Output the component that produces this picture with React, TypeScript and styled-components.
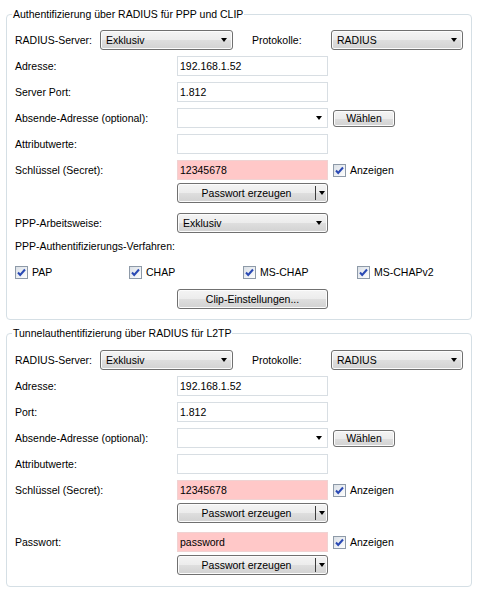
import styled, { createGlobalStyle } from "styled-components";

const GlobalStyle = createGlobalStyle`
    html, body {
        margin: 0;
        padding: 0;
        background: #ffffff;
    }
    body {
        font-family: "Liberation Sans", Arial, sans-serif;
        font-size: 10.5px;
        color: #000000;
    }
`;

const Page = styled.div`
    width: 480px;
    height: 596px;
    overflow: hidden;
`;

const Group = styled.div<{ $mt: number; $pt: number; $pb: number }>`
    position: relative;
    box-sizing: border-box;
    width: 466px;
    margin: ${(p) => p.$mt}px 0 0 6px;
    padding: ${(p) => p.$pt}px 8px ${(p) => p.$pb}px 8px;
    border: 1px solid #d5dfe5;
    border-radius: 4px;
`;

const Legend = styled.span`
    position: absolute;
    top: -8px;
    left: 5px;
    padding: 0 1px;
    line-height: 14px;
    background: #ffffff;
    white-space: nowrap;
`;

const Row = styled.div<{ $mt?: number; $h?: number }>`
    display: flex;
    align-items: center;
    height: ${(p) => p.$h ?? 20}px;
    margin-top: ${(p) => p.$mt ?? 6}px;
`;

const Label = styled.span<{ $w?: number; $ml?: number }>`
    flex: none;
    width: ${(p) => p.$w ?? 162}px;
    margin-left: ${(p) => p.$ml ?? 0}px;
    white-space: nowrap;
`;

const TextBox = styled.div<{ $pink?: boolean }>`
    box-sizing: border-box;
    flex: none;
    width: 151px;
    height: 20px;
    padding: 0 2px;
    line-height: 18px;
    border: 1px solid ${(p) => (p.$pink ? "#f0d2d2" : "#d8dee3")};
    background: ${(p) => (p.$pink ? "#ffc8c8" : "#ffffff")};
    white-space: nowrap;
`;

const Arrow = styled.span`
    flex: none;
    width: 0;
    height: 0;
    border-left: 3.5px solid transparent;
    border-right: 3.5px solid transparent;
    border-top: 4px solid #000000;
`;

const DropButton = styled.div<{ $w: number }>`
    box-sizing: border-box;
    flex: none;
    display: flex;
    align-items: center;
    justify-content: space-between;
    width: ${(p) => p.$w}px;
    height: 20px;
    padding: 0 5px 0 5px;
    border: 1px solid #707070;
    border-radius: 3px;
    background: linear-gradient(#f4f4f4 0%, #ececec 50%, #dedede 52%, #d2d2d2 100%);
    box-shadow: inset 0 0 0 1px #fcfcfc;
`;

const Combo = styled.div`
    box-sizing: border-box;
    flex: none;
    display: flex;
    align-items: center;
    justify-content: flex-end;
    width: 151px;
    height: 20px;
    padding-right: 5px;
    border: 1px solid #d8dee3;
    background: #ffffff;
`;

const Button = styled.div<{ $w: number; $h?: number; $ml?: number }>`
    box-sizing: border-box;
    flex: none;
    display: flex;
    align-items: center;
    justify-content: center;
    width: ${(p) => p.$w}px;
    height: ${(p) => p.$h ?? 20}px;
    margin-left: ${(p) => p.$ml ?? 0}px;
    border: 1px solid #707070;
    border-radius: 3px;
    background: linear-gradient(#f4f4f4 0%, #ececec 50%, #dedede 52%, #d2d2d2 100%);
    box-shadow: inset 0 0 0 1px #fcfcfc;
    white-space: nowrap;
`;

const Split = styled.div`
    box-sizing: border-box;
    flex: none;
    display: flex;
    width: 151px;
    height: 20px;
    margin-left: 162px;
    border: 1px solid #707070;
    border-radius: 3px;
    background: linear-gradient(#f4f4f4 0%, #ececec 50%, #dedede 52%, #d2d2d2 100%);
    box-shadow: inset 0 0 0 1px #fcfcfc;
`;

const SplitMain = styled.span`
    flex: 1;
    display: flex;
    align-items: center;
    justify-content: center;
    border-right: 1px solid #3c3c3c;
    margin: 2px 0;
`;

const SplitArrow = styled.span`
    flex: none;
    width: 11px;
    display: flex;
    align-items: center;
    justify-content: center;
`;

const CheckWrap = styled.span<{ $ml?: number }>`
    display: inline-flex;
    align-items: center;
    gap: 4px;
    margin-left: ${(p) => p.$ml ?? 0}px;
    white-space: nowrap;
`;

const CheckGrid = styled.div`
    display: grid;
    grid-template-columns: repeat(4, 114px);
    align-items: center;
    height: 14px;
    margin-top: 12px;
`;

function Check({ label, ml }: { label: string; ml?: number }) {
    return (
        <CheckWrap $ml={ml}>
            <svg width="13" height="13" viewBox="0 0 13 13">
                <defs>
                    <linearGradient id="cbg" x1="0" y1="0" x2="1" y2="1">
                        <stop offset="0" stopColor="#d9dfe6" />
                        <stop offset="1" stopColor="#ffffff" />
                    </linearGradient>
                </defs>
                <rect x="0.5" y="0.5" width="12" height="12" fill="url(#cbg)" stroke="#8e9aa8" />
                <path d="M3 6.5 L5.2 9 L10 3.5" fill="none" stroke="#2a49b4" strokeWidth="2" />
            </svg>
            {label}
        </CheckWrap>
    );
}

function Select({ value, w }: { value: string; w: number }) {
    return (
        <DropButton $w={w}>
            <span>{value}</span>
            <Arrow />
        </DropButton>
    );
}

function PwButton() {
    return (
        <Row $mt={3}>
            <Split>
                <SplitMain>Passwort erzeugen</SplitMain>
                <SplitArrow>
                    <Arrow />
                </SplitArrow>
            </Split>
        </Row>
    );
}

function ServerRows({ portLabel }: { portLabel: string }) {
    return (
        <>
            <Row $mt={0}>
                <Label $w={85}>RADIUS-Server:</Label>
                <Select value="Exklusiv" w={133} />
                <Label $w={79} $ml={19}>Protokolle:</Label>
                <Select value="RADIUS" w={132} />
            </Row>
            <Row>
                <Label>Adresse:</Label>
                <TextBox>192.168.1.52</TextBox>
            </Row>
            <Row>
                <Label>{portLabel}</Label>
                <TextBox>1.812</TextBox>
            </Row>
            <Row>
                <Label>Absende-Adresse (optional):</Label>
                <Combo>
                    <Arrow />
                </Combo>
                <Button $w={62} $h={17} $ml={5}>Wählen</Button>
            </Row>
            <Row>
                <Label>Attributwerte:</Label>
                <TextBox />
            </Row>
            <Row>
                <Label>Schlüssel (Secret):</Label>
                <TextBox $pink>12345678</TextBox>
                <Check label="Anzeigen" ml={5} />
            </Row>
            <PwButton />
        </>
    );
}

export default function App() {
    return (
        <Page>
            <GlobalStyle />
            <Group $mt={14} $pt={15} $pb={10}>
                <Legend>Authentifizierung über RADIUS für PPP und CLIP</Legend>
                <ServerRows portLabel="Server Port:" />
                <Row $mt={10}>
                    <Label>PPP-Arbeitsweise:</Label>
                    <Select value="Exklusiv" w={151} />
                </Row>
                <Row $mt={6} $h={14}>
                    <Label>PPP-Authentifizierungs-Verfahren:</Label>
                </Row>
                <CheckGrid>
                    <Check label="PAP" />
                    <Check label="CHAP" />
                    <Check label="MS-CHAP" />
                    <Check label="MS-CHAPv2" />
                </CheckGrid>
                <Row $mt={10}>
                    <Label />
                    <Button $w={151}>Clip-Einstellungen...</Button>
                </Row>
            </Group>
            <Group $mt={13} $pt={16} $pb={11}>
                <Legend>Tunnelauthentifizierung über RADIUS für L2TP</Legend>
                <ServerRows portLabel="Port:" />
                <Row $mt={9}>
                    <Label>Passwort:</Label>
                    <TextBox $pink>password</TextBox>
                    <Check label="Anzeigen" ml={5} />
                </Row>
                <PwButton />
            </Group>
        </Page>
    );
}
